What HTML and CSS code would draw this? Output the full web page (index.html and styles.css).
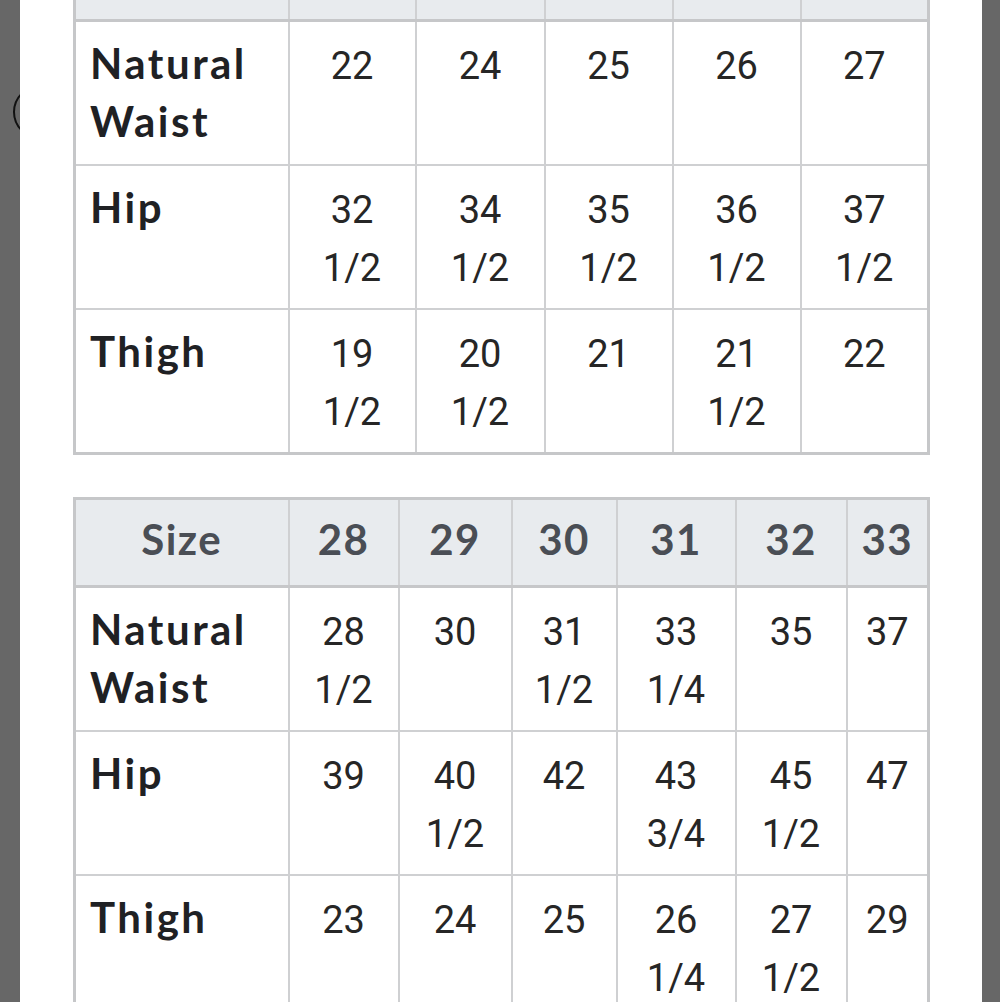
FILE: index.html
```html
<!DOCTYPE html>
<html lang="en">
<head>
<meta charset="utf-8">
<title>Size chart</title>
<link rel="stylesheet" href="styles.css">
</head>
<body>
<div class="ring"></div>
<main class="panel">
  <table class="chart chart-a">
    <thead>
      <tr class="head-clipped"><th class="label"></th><th></th><th></th><th></th><th></th><th></th></tr>
    </thead>
    <tbody>
      <tr><th class="label">Natural Waist</th><td>22</td><td>24</td><td>25</td><td>26</td><td>27</td></tr>
      <tr><th class="label">Hip</th><td>32 1/2</td><td>34 1/2</td><td>35 1/2</td><td>36 1/2</td><td>37 1/2</td></tr>
      <tr><th class="label">Thigh</th><td>19 1/2</td><td>20 1/2</td><td>21</td><td>21 1/2</td><td>22</td></tr>
    </tbody>
  </table>
  <table class="chart chart-b">
    <thead>
      <tr><th class="label">Size</th><th>28</th><th>29</th><th>30</th><th>31</th><th>32</th><th>33</th></tr>
    </thead>
    <tbody>
      <tr><th class="label">Natural Waist</th><td>28 1/2</td><td>30</td><td>31 1/2</td><td>33 1/4</td><td>35</td><td>37</td></tr>
      <tr><th class="label">Hip</th><td>39</td><td>40 1/2</td><td>42</td><td>43 3/4</td><td>45 1/2</td><td>47</td></tr>
      <tr><th class="label">Thigh</th><td>23</td><td>24</td><td>25</td><td>26 1/4</td><td>27 1/2</td><td>29</td></tr>
    </tbody>
  </table>
</main>
</body>
</html>
```

FILE: styles.css
```css
html, body {
  margin: 0;
  padding: 0;
}
body {
  background: #676767;
  width: 1000px;
  height: 1002px;
  overflow: hidden;
  position: relative;
}
.ring {
  position: absolute;
  left: 13px;
  top: 85px;
  width: 50px;
  height: 50px;
  border: 2px solid #111;
  border-radius: 50%;
  z-index: 0;
}
.panel {
  position: relative;
  z-index: 1;
  background: #ffffff;
  margin: 0 18px 0 20px;
  height: 1002px;
  box-sizing: border-box;
  padding: 0 55px 0 53px;
  display: flex;
  flex-direction: column;
  gap: 42px;
  overflow: hidden;
}
.chart {
  border-collapse: collapse;
  table-layout: fixed;
  width: 854px;
  border: 3px solid #c6c7c9;
  flex: none;
}
.chart-a {
  margin-top: -69px;
}
.chart th,
.chart td {
  box-sizing: border-box;
  border: 2px solid #cfd0d2;
  padding: 15px 16px 11px;
  line-height: 58px;
  vertical-align: top;
  text-align: center;
  font-family: Roboto, "Liberation Sans", sans-serif;
  font-weight: 400;
  font-size: 38px;
  color: #262626;
}
.chart thead th {
  background: #e8ebee;
  font-family: Lato, "Liberation Sans", sans-serif;
  font-weight: 700;
  font-size: 42px;
  letter-spacing: 1.5px;
  color: #4a4e55;
  padding: 10px 4px 17px;
  border-bottom-width: 3px;
  border-bottom-color: #c6c7c9;
}
.chart .head-clipped th {
  height: 88px;
}
.chart tbody th.label {
  text-align: left;
  padding: 12px 8px 14px 14px;
  font-family: Lato, "Liberation Sans", sans-serif;
  font-weight: 700;
  font-size: 42px;
  letter-spacing: 2.5px;
  color: #1f2124;
}
.chart th:first-child { width: 214px; }
.chart-a th:nth-child(2) { width: 127px; }
.chart-a th:nth-child(3) { width: 129px; }
.chart-a th:nth-child(4) { width: 128px; }
.chart-a th:nth-child(5) { width: 128px; }
.chart-a th:nth-child(6) { width: 128px; }
.chart-b th:nth-child(2) { width: 110px; }
.chart-b th:nth-child(3) { width: 113px; }
.chart-b th:nth-child(4) { width: 105px; }
.chart-b th:nth-child(5) { width: 119px; }
.chart-b th:nth-child(6) { width: 111px; }
.chart-b th:nth-child(7) { width: 82px; }
```
